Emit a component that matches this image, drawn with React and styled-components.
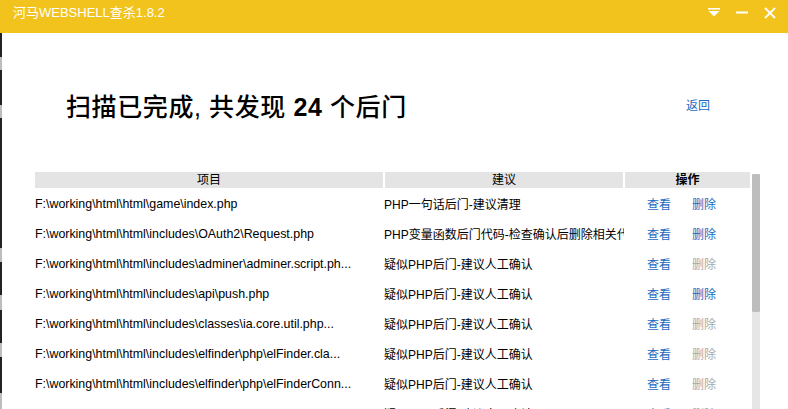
import React from 'react';
import styled, { createGlobalStyle } from 'styled-components';

const GlobalStyle = createGlobalStyle`
  html, body {
    margin: 0;
    padding: 0;
    background: #ffffff;
  }
  body {
    font-family: "Liberation Sans", "Noto Sans CJK SC", sans-serif;
  }
`;

const Window = styled.div`
  width: 788px;
  height: 409px;
  display: flex;
  flex-direction: column;
  overflow: hidden;
  background: #ffffff;
`;

const TitleBar = styled.div`
  height: 33px;
  flex: none;
  display: flex;
  align-items: center;
  background: #f2c31c;
  padding: 0 4px 0 13px;
  box-sizing: border-box;
`;

const Title = styled.div`
  flex: 1;
  color: #ffffff;
  font-size: 13px;
  line-height: 13px;
  margin-top: -9px;
`;

const TitleButton = styled.div`
  width: ${(p) => p.w}px;
  height: 33px;
  display: flex;
  align-items: center;
  justify-content: center;
  margin-top: -8px;
`;

const Body = styled.div`
  flex: 1;
  display: flex;
  min-height: 0;
`;

const LeftEdge = styled.div`
  width: 2px;
  flex: none;
  background: linear-gradient(
    to bottom,
    #222 0, #222 24px,
    #bdbdbd 24px, #bdbdbd 37px,
    #222 37px, #222 72px,
    #bdbdbd 72px, #bdbdbd 85px,
    #222 85px, #222 215px,
    #bdbdbd 215px, #bdbdbd 229px,
    #222 229px, #222 262px,
    #bdbdbd 262px, #bdbdbd 277px,
    #222 277px, #222 310px,
    #bdbdbd 310px, #bdbdbd 324px,
    #222 324px, #222 360px,
    #bdbdbd 360px
  );
`;

const Main = styled.div`
  flex: 1;
  display: flex;
  flex-direction: column;
  min-width: 0;
`;

const HeadRow = styled.div`
  height: 139px;
  flex: none;
  display: flex;
  align-items: center;
  justify-content: space-between;
  padding: 4px 78px 0 64px;
  box-sizing: border-box;
`;

const Heading = styled.h1`
  margin: 0;
  font-size: 25px;
  font-weight: 500;
  color: #000;
  letter-spacing: 0.6px;
`;

const Count = styled.b`
  font-weight: 700;
`;

const BackLink = styled.a`
  font-size: 12px;
  color: #1b6ac0;
  text-decoration: none;
  cursor: pointer;
`;

const TableArea = styled.div`
  flex: 1;
  display: flex;
  margin-left: 33px;
  min-height: 0;
`;

const Table = styled.div`
  width: 715px;
  flex: none;
  display: flex;
  flex-direction: column;
`;

const HeaderRow = styled.div`
  display: grid;
  grid-template-columns: 348px 238px 125px;
  column-gap: 2px;
  height: 16px;
`;

const HeaderCell = styled.div`
  background: #e4e4e4;
  font-size: 12px;
  line-height: 16px;
  text-align: center;
  color: #000;
  font-weight: ${(p) => (p.bold ? 700 : 400)};
`;

const Row = styled.div`
  display: grid;
  grid-template-columns: 349px 240px 1fr;
  height: 30px;
  align-items: center;
  font-size: 12px;
  line-height: 16px;
  color: #000;
  flex: none;
`;

const Cell = styled.div`
  white-space: nowrap;
  overflow: hidden;
  padding-top: 4px;
`;

const PathCell = styled(Cell)`
  font-size: 12.4px;
  padding-top: 1px;
`;

const Actions = styled.div`
  display: flex;
  gap: 21px;
  padding: 4px 0 0 23px;
`;

const Action = styled.a`
  font-size: 12px;
  color: ${(p) => (p.disabled ? '#a9a9a9' : '#1b6ac0')};
  cursor: ${(p) => (p.disabled ? 'default' : 'pointer')};
`;

const ScrollBar = styled.div`
  width: 8px;
  flex: none;
  margin: 2px 0 0 2px;
  display: flex;
  flex-direction: column;
`;

const Thumb = styled.div`
  height: 138px;
  background: #bdbdbd;
  border-radius: 1px;
`;

const Track = styled.div`
  flex: 1;
  background: #e6e6e6;
`;

const MenuIcon = () => (
  <svg width="12" height="9" viewBox="0 0 12 9">
    <rect x="0" y="0" width="12" height="1.6" fill="#fff" />
    <polygon points="0.5,3 11.5,3 6,8.5" fill="#fff" />
  </svg>
);

const MinIcon = () => (
  <svg width="12" height="3" viewBox="0 0 12 3">
    <rect x="0" y="0.5" width="12" height="2" fill="#fff" />
  </svg>
);

const CloseIcon = () => (
  <svg width="12" height="12" viewBox="0 0 12 12">
    <path d="M1 1 L11 11 M11 1 L1 11" stroke="#fff" strokeWidth="1.8" />
  </svg>
);

const rows = [
  { path: 'F:\\working\\html\\html\\game\\index.php', tip: 'PHP一句话后门-建议清理', del: true },
  { path: 'F:\\working\\html\\html\\includes\\OAuth2\\Request.php', tip: 'PHP变量函数后门代码-检查确认后删除相关代码', del: true },
  { path: 'F:\\working\\html\\html\\includes\\adminer\\adminer.script.ph...', tip: '疑似PHP后门-建议人工确认', del: false },
  { path: 'F:\\working\\html\\html\\includes\\api\\push.php', tip: '疑似PHP后门-建议人工确认', del: true },
  { path: 'F:\\working\\html\\html\\includes\\classes\\ia.core.util.php...', tip: '疑似PHP后门-建议人工确认', del: false },
  { path: 'F:\\working\\html\\html\\includes\\elfinder\\php\\elFinder.cla...', tip: '疑似PHP后门-建议人工确认', del: false },
  { path: 'F:\\working\\html\\html\\includes\\elfinder\\php\\elFinderConn...', tip: '疑似PHP后门-建议人工确认', del: false },
  { path: 'F:\\working\\html\\html\\includes\\elfinder\\php\\elFinderVolu...', tip: '疑似PHP后门-建议人工确认', del: false },
];

const App = () => (
  <Window>
    <GlobalStyle />
    <TitleBar>
      <Title>河马WEBSHELL查杀1.8.2</Title>
      <TitleButton w={28}><MenuIcon /></TitleButton>
      <TitleButton w={28}><MinIcon /></TitleButton>
      <TitleButton w={28}><CloseIcon /></TitleButton>
    </TitleBar>
    <Body>
      <LeftEdge />
      <Main>
        <HeadRow>
          <Heading>扫描已完成, 共发现 <Count>24</Count> 个后门</Heading>
          <BackLink>返回</BackLink>
        </HeadRow>
        <TableArea>
          <Table>
            <HeaderRow>
              <HeaderCell>项目</HeaderCell>
              <HeaderCell>建议</HeaderCell>
              <HeaderCell bold>操作</HeaderCell>
            </HeaderRow>
            {rows.map((r, i) => (
              <Row key={i}>
                <PathCell>{r.path}</PathCell>
                <Cell>{r.tip}</Cell>
                <Actions>
                  <Action>查看</Action>
                  <Action disabled={!r.del}>删除</Action>
                </Actions>
              </Row>
            ))}
          </Table>
          <ScrollBar>
            <Thumb />
            <Track />
          </ScrollBar>
        </TableArea>
      </Main>
    </Body>
  </Window>
);

export default App;
